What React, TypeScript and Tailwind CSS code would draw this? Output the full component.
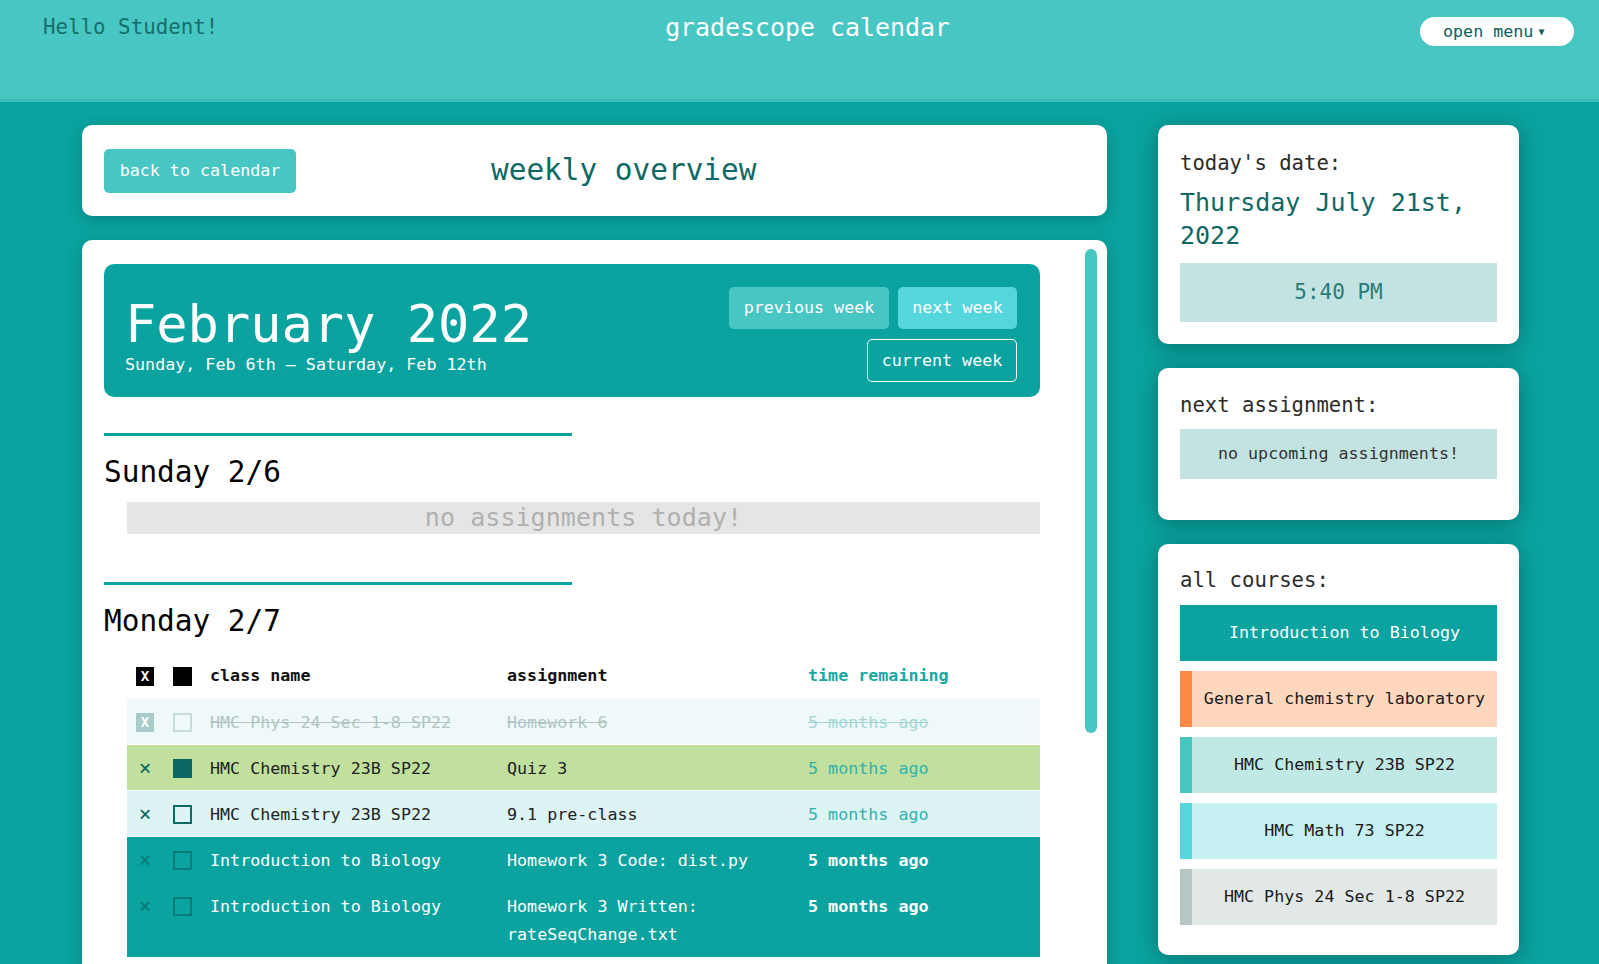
import React from "react";

const mono = { fontFamily: '"DejaVu Sans Mono", "Liberation Mono", monospace' };

function XBox({ faded }: { faded?: boolean }) {
  return (
    <div
      className={`w-[18px] h-[19px] flex items-center justify-center text-white text-[14px] font-bold leading-none ${
        faded ? "bg-[#a9cbc9]" : "bg-black"
      }`}
    >
      X
    </div>
  );
}

type Row = {
  cls: string;
  asg: string[];
  time: string;
  kind: "done" | "green" | "cyan" | "teal";
  checked?: boolean;
};

const rows: Row[] = [
  { cls: "HMC Phys 24 Sec 1-8 SP22", asg: ["Homework 6"], time: "5 months ago", kind: "done" },
  { cls: "HMC Chemistry 23B SP22", asg: ["Quiz 3"], time: "5 months ago", kind: "green", checked: true },
  { cls: "HMC Chemistry 23B SP22", asg: ["9.1 pre-class"], time: "5 months ago", kind: "cyan" },
  { cls: "Introduction to Biology", asg: ["Homework 3 Code: dist.py"], time: "5 months ago", kind: "teal" },
  { cls: "Introduction to Biology", asg: ["Homework 3 Written:", "rateSeqChange.txt"], time: "5 months ago", kind: "teal" },
];

function TableRow({ r }: { r: Row }) {
  const bg =
    r.kind === "done"
      ? "bg-[#eff9f9]"
      : r.kind === "green"
      ? "bg-[#c1e09e]"
      : r.kind === "cyan"
      ? "bg-[#ddf4f4]"
      : "bg-[#0aa39f]";
  const text =
    r.kind === "done"
      ? "text-[#b2c4c3] line-through"
      : r.kind === "teal"
      ? "text-white"
      : "text-[#222222]";
  const timeCls =
    r.kind === "done"
      ? "text-[#a3d7d5] line-through"
      : r.kind === "teal"
      ? "text-white font-bold"
      : "text-[#2fb3ae]";
  const xColor = r.kind === "teal" ? "text-[#0b7b77]" : "text-[#0d6a65]";
  const boxBorder =
    r.kind === "done" ? "border-[#c4dcdb]" : r.kind === "teal" ? "border-[#0b7b77]" : "border-[#0d6a65]";
  const pad = r.kind === "teal" ? "py-[9px]" : "pt-[9px] pb-[8px] border-b border-white";
  return (
    <div className={`flex items-start pl-[9px] text-[16.7px] leading-[28px] ${bg} ${pad}`}>
      <div className="w-[37px] h-[28px] flex items-center">
        {r.kind === "done" ? (
          <XBox faded />
        ) : (
          <span className={`w-[18px] text-center text-[21px] leading-none ${xColor}`}>×</span>
        )}
      </div>
      <div className="w-[37px] h-[28px] flex items-center">
        {r.checked ? (
          <div className="w-[19px] h-[19px] bg-[#0b6661]" />
        ) : (
          <div className={`w-[19px] h-[19px] border-2 ${boxBorder}`} />
        )}
      </div>
      <div className={`w-[297px] ${text}`}>{r.cls}</div>
      <div className={`w-[301px] pr-[20px] ${text}`}>
        {r.asg.map((a) => (
          <div key={a}>{a}</div>
        ))}
      </div>
      <div className={`flex-1 ${timeCls}`}>{r.time}</div>
    </div>
  );
}

function Divider() {
  return <div className="w-[468px] h-[3px] bg-[#0aa39f]" />;
}

const courses = [
  { name: "Introduction to Biology", bg: "bg-[#0aa39f]", bar: "bg-[#0aa39f]", text: "text-white" },
  { name: "General chemistry laboratory", bg: "bg-[#ffd7bd]", bar: "bg-[#fd8b47]", text: "text-[#1a1a1a]" },
  { name: "HMC Chemistry 23B SP22", bg: "bg-[#c0e9e6]", bar: "bg-[#47c5c1]", text: "text-[#1a1a1a]" },
  { name: "HMC Math 73 SP22", bg: "bg-[#c6eff1]", bar: "bg-[#55d6dc]", text: "text-[#1a1a1a]" },
  { name: "HMC Phys 24 Sec 1-8 SP22", bg: "bg-[#e2e8e7]", bar: "bg-[#b5c6c4]", text: "text-[#1a1a1a]" },
];

export default function App() {
  return (
    <div className="w-[1599px] h-[964px] overflow-hidden bg-[#0aa39f]" style={mono}>
      {/* header */}
      <div className="h-[102px] bg-[#48c6c3] border-b-[3px] border-[#3dbdb9] grid grid-cols-[1fr_auto_1fr] items-start pt-[12px]">
        <div className="pl-[43px] text-[20.8px] leading-[31px] text-[#14706b]">Hello Student!</div>
        <div className="ml-[16px] text-[24.9px] leading-[31px] text-white">gradescope calendar</div>
        <div className="flex justify-end pr-[25px] pt-[5px]">
          <button className="h-[29px] w-[154px] rounded-full bg-white flex items-center pl-[23px] text-[16.7px] text-[#0e605c]">
            <span>open menu</span>
            <span className="ml-[5px] text-[10px] leading-none">▼</span>
          </button>
        </div>
      </div>

      {/* main */}
      <div className="flex items-start pt-[23px] pl-[82px]">
        {/* left column */}
        <div className="w-[1025px] flex flex-col">
          <div className="h-[91px] rounded-[10px] bg-white shadow-[0_4px_16px_rgba(0,0,0,0.2)] flex items-center px-[22px]">
            <button className="h-[44px] w-[192px] rounded-[5px] bg-[#48c6c3] text-white text-[16.7px]">
              back to calendar
            </button>
            <div className="ml-[195px] text-[29.4px] text-[#0e6964]">weekly overview</div>
          </div>

          <div className="mt-[24px] h-[800px] rounded-[10px] bg-white shadow-[0_4px_16px_rgba(0,0,0,0.2)] flex overflow-hidden">
            <div className="w-[958px] pl-[22px] pt-[24px] flex flex-col">
              {/* month block */}
              <div className="w-[936px] h-[133px] rounded-[10px] bg-[#0aa39f] flex justify-between pl-[21px] pr-[23px] pt-[23px]">
                <div className="flex flex-col text-white">
                  <div className="mt-[11px] text-[52px] leading-[52px]">February 2022</div>
                  <div className="mt-[3px] text-[16.7px] leading-[22px]">Sunday, Feb 6th – Saturday, Feb 12th</div>
                </div>
                <div className="flex flex-col items-end">
                  <div className="flex gap-[9px]">
                    <button className="h-[42px] w-[160px] rounded-[5px] bg-[#48c6c3] text-white text-[16.7px]">
                      previous week
                    </button>
                    <button className="h-[42px] w-[119px] rounded-[5px] bg-[#55d6dc] text-white text-[16.7px]">
                      next week
                    </button>
                  </div>
                  <button className="mt-[10px] h-[43px] w-[150px] rounded-[5px] border-[1.5px] border-white text-white text-[16.7px]">
                    current week
                  </button>
                </div>
              </div>

              <div className="mt-[36px]">
                <Divider />
              </div>
              <div className="mt-[18px] text-[29.4px] leading-[37px] text-black">Sunday 2/6</div>
              <div className="mt-[11px] ml-[23px] h-[32px] w-[913px] bg-[#e5e5e5] text-center text-[25.1px] leading-[32px] text-[#b0b0b0]">
                no assignments today!
              </div>

              <div className="mt-[48px]">
                <Divider />
              </div>
              <div className="mt-[18px] text-[29.4px] leading-[37px] text-black">Monday 2/7</div>

              <div className="mt-[23px] ml-[23px] w-[913px] flex flex-col">
                <div className="h-[26px] mb-[10px] flex items-center pl-[9px] text-[16.7px] font-bold">
                  <div className="w-[37px]">
                    <XBox />
                  </div>
                  <div className="w-[37px]">
                    <div className="w-[19px] h-[19px] bg-black" />
                  </div>
                  <div className="w-[297px] text-[#111]">class name</div>
                  <div className="w-[301px] text-[#111]">assignment</div>
                  <div className="flex-1 text-[#1aa7a3]">time remaining</div>
                </div>
                {rows.map((r, i) => (
                  <TableRow key={i} r={r} />
                ))}
              </div>
            </div>
            {/* scrollbar */}
            <div className="flex-1 flex justify-end pr-[10px] pt-[9px]">
              <div className="w-[12px] h-[484px] rounded-full bg-[#48c6c3]" />
            </div>
          </div>
        </div>

        {/* right column */}
        <div className="ml-[51px] w-[361px] flex flex-col gap-[24px]">
          <div className="h-[219px] rounded-[10px] bg-white shadow-[0_4px_24px_rgba(0,0,0,0.3)] px-[22px] pt-[26px]">
            <div className="text-[20.6px] leading-[25px] text-[#2b2b2b]">today's date:</div>
            <div className="mt-[10px] text-[25px] leading-[33px] text-[#0e6964]">Thursday July 21st, 2022</div>
            <div className="mt-[11px] h-[59px] bg-[#c2e3e2] flex items-center justify-center text-[21px] text-[#2a7b77]">
              5:40 PM
            </div>
          </div>

          <div className="h-[152px] rounded-[10px] bg-white shadow-[0_4px_24px_rgba(0,0,0,0.3)] px-[22px] pt-[25px]">
            <div className="text-[20.6px] leading-[25px] text-[#2b2b2b]">next assignment:</div>
            <div className="mt-[11px] h-[50px] bg-[#c2e3e2] flex items-center justify-center text-[16.7px] text-[#333]">
              no upcoming assignments!
            </div>
          </div>

          <div className="h-[411px] rounded-[10px] bg-white shadow-[0_4px_24px_rgba(0,0,0,0.3)] px-[22px] pt-[24px]">
            <div className="text-[20.6px] leading-[25px] text-[#2b2b2b]">all courses:</div>
            <div className="mt-[12px] flex flex-col gap-[10px]">
              {courses.map((c) => (
                <div key={c.name} className={`h-[56px] flex ${c.bg}`}>
                  <div className={`w-[12px] ${c.bar}`} />
                  <div className={`flex-1 flex items-center justify-center text-[16.7px] ${c.text}`}>{c.name}</div>
                </div>
              ))}
            </div>
          </div>
        </div>
      </div>
    </div>
  );
}
